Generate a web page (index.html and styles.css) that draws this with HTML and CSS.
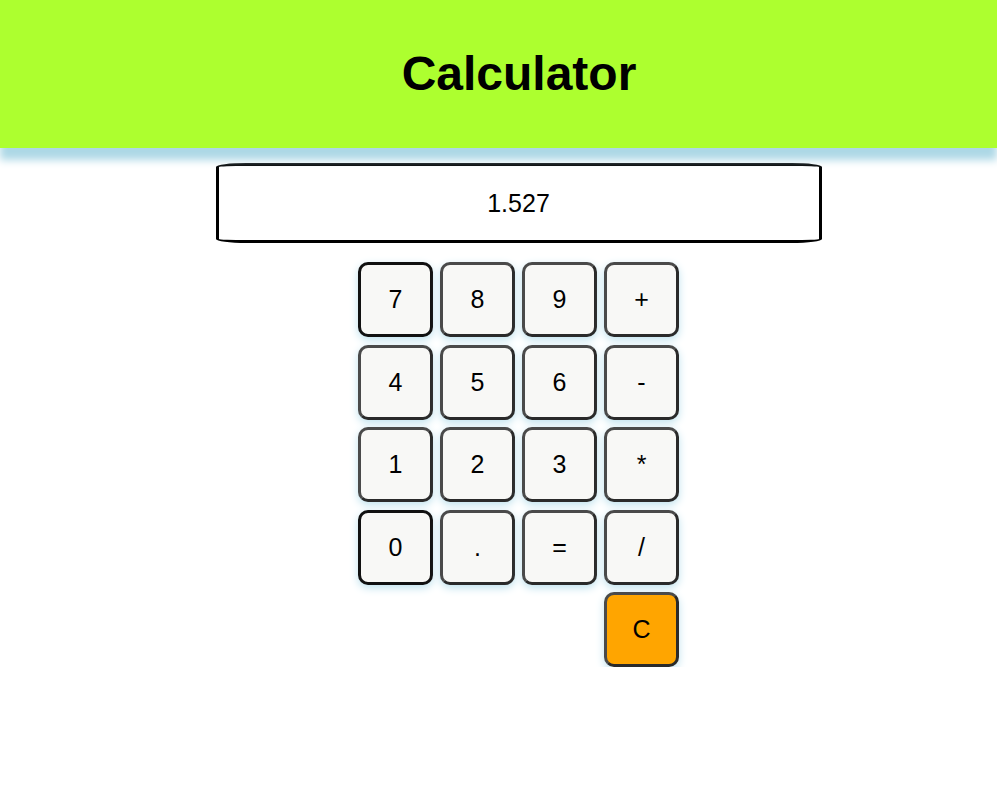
FILE: index.html
```html
<!DOCTYPE html>
<html>
<head>
<meta charset="utf-8">
<link rel="stylesheet" href="styles.css">
<title>Calculator</title>
</head>
<body>
<header class="top">
  <h1 class="title">Calculator</h1>
</header>
<main class="calc">
  <div class="display">1.527</div>
  <div class="keys">
    <button class="key key-dark">7</button>
    <button class="key">8</button>
    <button class="key">9</button>
    <button class="key">+</button>
    <button class="key">4</button>
    <button class="key">5</button>
    <button class="key">6</button>
    <button class="key">-</button>
    <button class="key">1</button>
    <button class="key">2</button>
    <button class="key">3</button>
    <button class="key">*</button>
    <button class="key key-dark">0</button>
    <button class="key">.</button>
    <button class="key">=</button>
    <button class="key">/</button>
    <button class="key key-clear">C</button>
  </div>
</main>
</body>
</html>
```
FILE: styles.css
```css
html, body {
  margin: 0;
  padding: 0;
  background: #ffffff;
  font-family: "Liberation Sans", Arial, sans-serif;
}

.top {
  height: 148px;
  background: #adff2f;
  box-shadow: 0 12px 8px #add8e6;
  display: flex;
  align-items: center;
  justify-content: center;
  padding-left: 41px;
  box-sizing: border-box;
  position: relative;
}

.title {
  margin: 0;
  font-size: 48px;
  font-weight: bold;
  color: #000;
  line-height: 1;
}

.calc {
  display: flex;
  flex-direction: column;
  align-items: center;
  padding-left: 40px;
  padding-top: 15px;
}

.display {
  width: 600px;
  height: 74px;
  border: 3px solid #000;
  border-radius: 5%;
  display: flex;
  align-items: center;
  justify-content: center;
  font-size: 25px;
  color: #000;
  background: #fff;
}

.keys {
  margin-top: 19px;
  display: grid;
  grid-template-columns: repeat(4, 75px);
  grid-auto-rows: 75px;
  column-gap: 7px;
  row-gap: 7.5px;
}

.key {
  width: 75px;
  height: 75px;
  box-sizing: border-box;
  border: 3px solid #4a4a4a;
  border-bottom-color: #2a2a2a;
  border-right-color: #2a2a2a;
  border-radius: 10px;
  background: #f8f8f6;
  font-family: "Liberation Sans", Arial, sans-serif;
  font-size: 25px;
  color: #000;
  box-shadow: 0 3px 8px #bfe2ee;
  padding: 0;
}

.key-dark {
  border-color: #111;
}

.key-clear {
  grid-column: 4;
  background: #ffa500;
}
```
